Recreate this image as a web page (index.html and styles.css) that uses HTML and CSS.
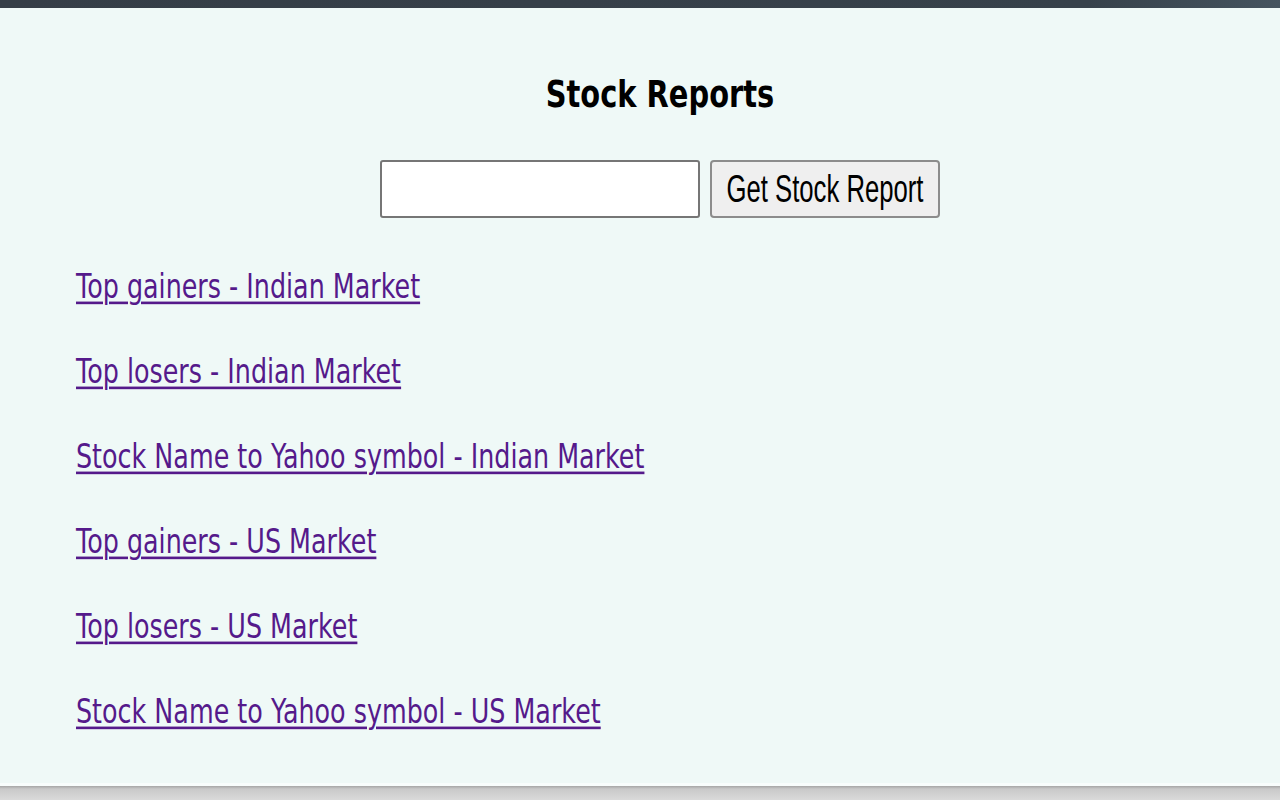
FILE: index.html
```html
<!DOCTYPE html>
<html lang="en">
<head>
<meta charset="utf-8">
<title>Stock Reports</title>
<link rel="stylesheet" href="styles.css">
</head>
<body>
<div class="top-bar"></div>
<main class="popup">
  <h1 class="title"><span class="stretch">Stock Reports</span></h1>
  <form class="search">
    <input class="search-input" type="text">
    <button class="search-btn" type="button"><span class="stretch">Get Stock Report</span></button>
  </form>
  <ul class="links">
    <li><a href="#"><span class="stretch">Top gainers - Indian Market</span></a></li>
    <li><a href="#"><span class="stretch">Top losers - Indian Market</span></a></li>
    <li><a href="#"><span class="stretch">Stock Name to Yahoo symbol - Indian Market</span></a></li>
    <li><a href="#"><span class="stretch">Top gainers - US Market</span></a></li>
    <li><a href="#"><span class="stretch">Top losers - US Market</span></a></li>
    <li><a href="#"><span class="stretch">Stock Name to Yahoo symbol - US Market</span></a></li>
  </ul>
</main>
<div class="bottom-edge"></div>
</body>
</html>
```

FILE: styles.css
```css
html, body {
  margin: 0;
  padding: 0;
  height: 800px;
  overflow: hidden;
  background: #d9d9d9;
}
body {
  display: flex;
  flex-direction: column;
}
.top-bar {
  height: 8px;
  background: linear-gradient(90deg, #353e47 0%, #37424b 85%, #45545f 100%);
  flex: none;
}
.popup {
  height: 778px;
  flex: none;
  box-sizing: border-box;
  background: #eff9f7;
  padding: 66px 0 0 40px;
  border-bottom: 3px solid #f8fdfc;
}
.bottom-edge {
  flex: 1;
  background: linear-gradient(180deg, #a6a6a6 0px, #c9c9c9 3px, #dadada 100%);
}
.stretch {
  display: inline-block;
}
.title {
  margin: 0;
  text-align: center;
  font-family: "DejaVu Sans", sans-serif;
  font-weight: bold;
  font-size: 28.9px;
  line-height: 40px;
  color: #000;
}
.title .stretch {
  transform: scaleY(1.27);
}
.search {
  margin: 46px 0 0;
  display: flex;
  justify-content: center;
  gap: 10px;
}
.search-input {
  width: 320px;
  height: 58px;
  box-sizing: border-box;
  border: 2px solid #767676;
  border-radius: 3px;
  background: #fff;
  margin: 0;
}
.search-btn {
  width: 230px;
  height: 58px;
  box-sizing: border-box;
  border: 2px solid #8c8c8c;
  border-radius: 4px;
  background: #efefef;
  margin: 0;
  padding: 0;
  font-family: "Liberation Sans", Arial, sans-serif;
  font-size: 25.7px;
  color: #000;
}
.search-btn .stretch {
  transform: scaleY(1.5);
}
.links {
  list-style: none;
  margin: 26px 0 0;
  padding: 0 0 0 36px;
}
.links li {
  height: 85px;
  line-height: 85px;
}
.links a {
  font-family: "DejaVu Sans", sans-serif;
  font-size: 25.4px;
  color: #551a8b;
  text-decoration: none;
}
.links .stretch {
  transform: scaleY(1.31);
  text-decoration: underline;
  text-decoration-thickness: 1.5px;
  text-underline-offset: 3px;
}
```
